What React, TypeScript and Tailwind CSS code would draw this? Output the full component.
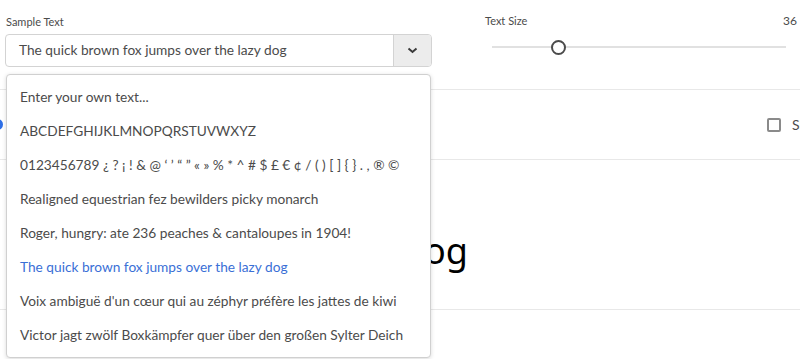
import React from "react";

const items = [
  "Enter your own text...",
  "ABCDEFGHIJKLMNOPQRSTUVWXYZ",
  "0123456789 ¿ ? ¡ ! & @ ‘ ’ “ ” « » % * ^ # $ £ € ¢ / ( ) [ ] { } . , ® ©",
  "Realigned equestrian fez bewilders picky monarch",
  "Roger, hungry: ate 236 peaches & cantaloupes in 1904!",
  "The quick brown fox jumps over the lazy dog",
  "Voix ambiguë d'un cœur qui au zéphyr préfère les jattes de kiwi",
  "Victor jagt zwölf Boxkämpfer quer über den großen Sylter Deich",
];

export default function App() {
  return (
    <div
      className="relative w-full h-[359px] overflow-hidden bg-white text-[#4b4b4b]"
      style={{ fontFamily: "Lato, 'Open Sans', sans-serif" }}
    >
      {/* Top controls */}
      <div className="flex h-[89px] pt-[15px]">
        <div className="relative ml-[5px] w-[427px]">
          <div className="text-[11px] leading-[14px] pl-[1px]">Sample Text</div>
          <div className="mt-[5px] flex h-[33px] rounded-[4px] border border-[#d3d3d3] overflow-hidden">
            <div className="flex-1 flex items-center pl-[13px] text-[13.7px]">
              The quick brown fox jumps over the lazy dog
            </div>
            <div className="w-[38px] flex items-center justify-center bg-[#ececec] border-l border-[#d3d3d3]">
              <svg width="11" height="7" viewBox="0 0 11 7">
                <path d="M1.5 1.5 L5.5 5 L9.5 1.5" fill="none" stroke="#3a3a3a" strokeWidth="2" />
              </svg>
            </div>
          </div>
          {/* Dropdown menu */}
          <div className="absolute z-10 left-[1px] top-[59px] w-[425px] rounded-[4px] border border-[#d0d0d0] bg-white shadow-[0_1px_4px_rgba(0,0,0,0.15)] py-[5px]">
            {items.map((t, i) => (
              <div
                key={i}
                className={`h-[34px] flex items-center pl-[13px] text-[13.7px] whitespace-nowrap ${
                  i === 5 ? "text-[#3a6fd6]" : "text-[#4b4b4b]"
                }`}
              >
                {t}
              </div>
            ))}
          </div>
        </div>
        <div className="ml-[53px] w-[310px]">
          <div className="flex justify-between text-[11px] leading-[14px] -mt-[1px]">
            <span>Text Size</span>
            <span className="text-[12px] mr-[-2px]">36</span>
          </div>
          <div className="relative mt-[11px] ml-[7px] w-[294px] h-[16px] flex items-center">
            <div className="w-full h-[2px] bg-[#e1e1e1]" />
            <div className="absolute left-[59px] w-[15px] h-[15px] rounded-full border-2 border-[#4b4b4b] bg-white" />
          </div>
        </div>
      </div>
      <div className="h-px bg-[#e8e8e8]" />
      {/* Options row */}
      <div className="h-[69px] flex items-center">
        <div className="shrink-0 -ml-[8px] w-[11px] h-[11px] rounded-full border-[3px] border-[#2d6ee6]" />
        <div className="shrink-0 flex items-center gap-[11px] ml-[764px] whitespace-nowrap">
          <div className="shrink-0 w-[14px] h-[14px] rounded-[2px] border-2 border-[#8a8a8a]" />
          <span className="text-[14px]">Show</span>
        </div>
      </div>
      <div className="h-px bg-[#e8e8e8]" />
      {/* Preview */}
      <div className="h-[149px] flex items-center">
        <div
          className="w-[468px] text-right text-[36px] leading-[40px] text-black whitespace-nowrap pt-[32px]"
          style={{ fontFamily: "'Noto Sans', 'DejaVu Sans', sans-serif" }}
        >
          over the lazy dog
        </div>
      </div>
      <div className="h-px bg-[#e8e8e8]" />
    </div>
  );
}
